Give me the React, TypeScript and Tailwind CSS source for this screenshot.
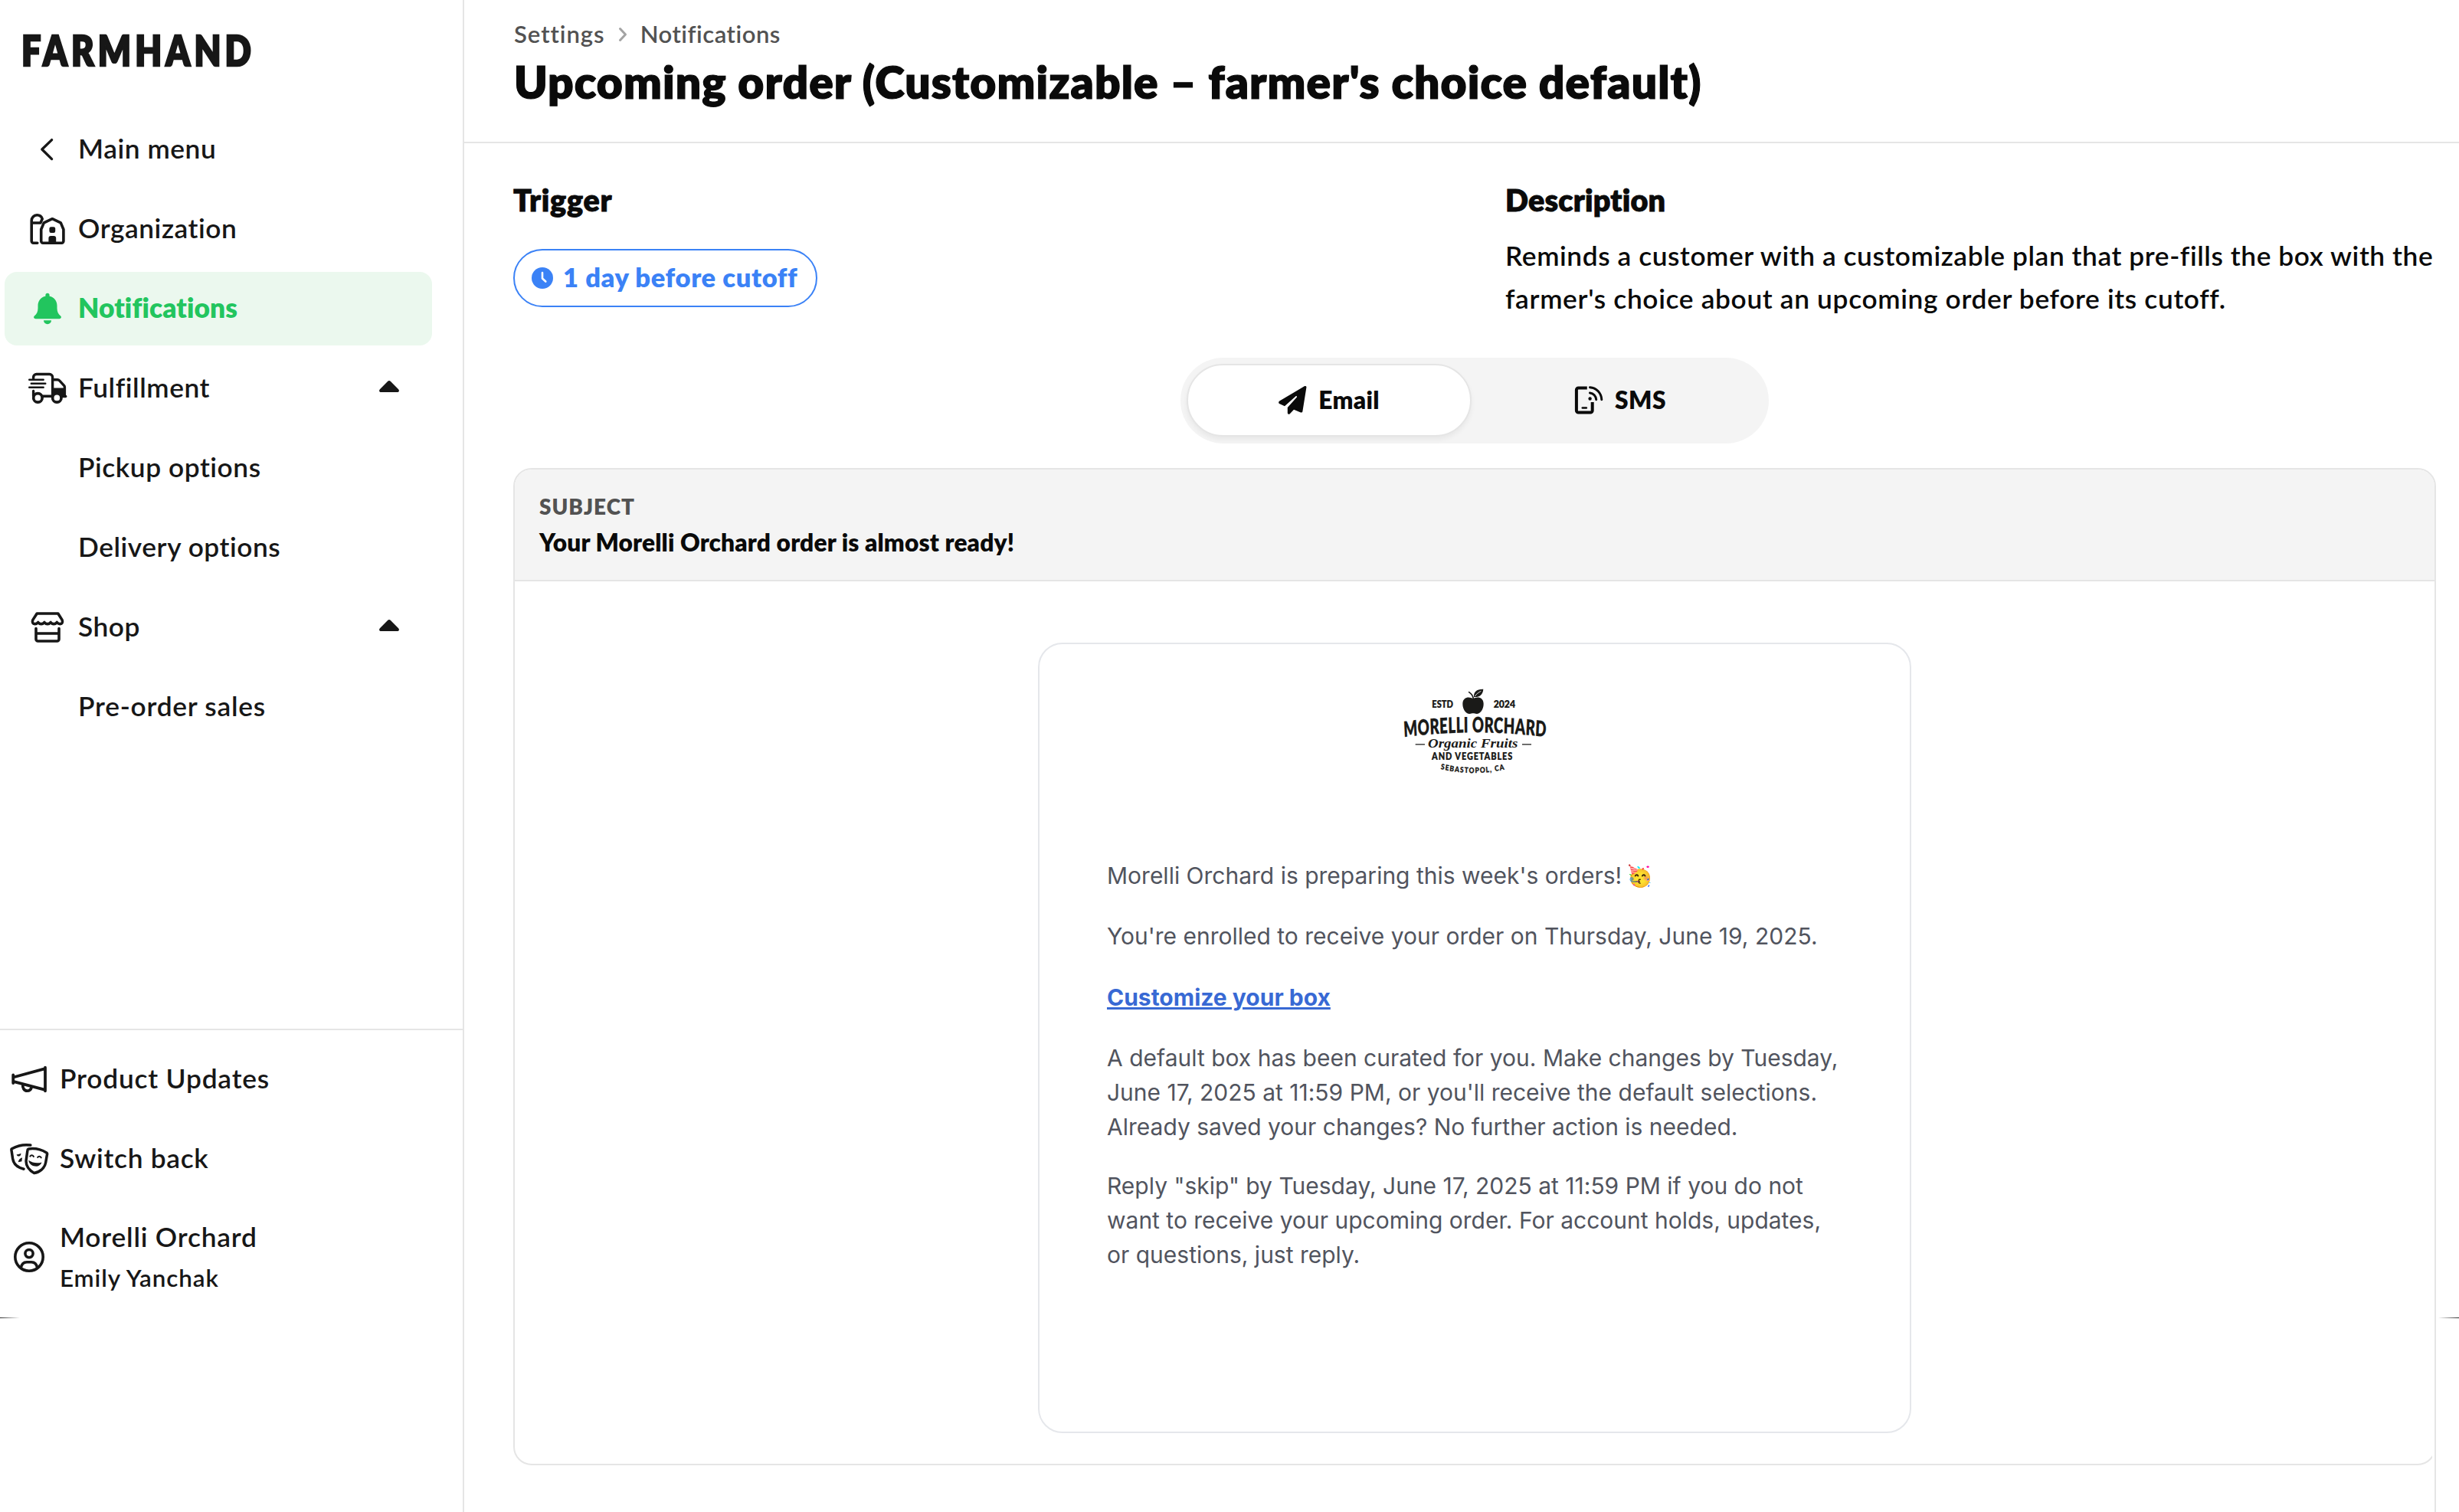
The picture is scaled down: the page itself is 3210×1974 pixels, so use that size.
import React from "react";
import type { ReactNode } from "react";

const box = "block h-[52px] w-[52px] shrink-0 overflow-visible";

function BackIcon() {
  return (
    <svg viewBox="0 0 52 52" className={box} fill="none" stroke="currentColor" strokeWidth="3.3" strokeLinecap="round" strokeLinejoin="round">
      <path d="M31.6 13.6 18.8 26l12.8 12.6" />
    </svg>
  );
}

function BarnIcon() {
  return (
    <svg viewBox="0 0 52 52" className={box} fill="none" stroke="currentColor" strokeWidth="3.6" strokeLinejoin="round" strokeLinecap="round">
      <path d="M17.7 41.8V26.5l3.6-8.6 11-5.2 11 5.2 3.6 8.6v15.3a2.4 2.4 0 0 1-2.4 2.4H20.1a2.4 2.4 0 0 1-2.4-2.4Z" />
      <path d="M12.8 44.2H7.6A2.4 2.4 0 0 1 5.2 41.8V15c0-4 3-7.2 7.1-7.2 3.3 0 6 2.1 6.9 5L17 17.7M5.2 18H17" />
      <rect x="28.4" y="23.2" width="7.8" height="7.8" rx="2.2" fill="currentColor" stroke="none" />
      <path d="M27.4 45v-7a3 3 0 0 1 3-3h3.8a3 3 0 0 1 3 3v7Z" fill="currentColor" stroke="none" />
    </svg>
  );
}

function BellIcon() {
  return (
    <svg viewBox="0 0 52 52" className={box} fill="currentColor">
      <path d="M26 5.8a2.6 2.6 0 0 1 2.6 2.6v1.3c6 1.2 9.9 6 9.9 12.3v3.2c0 4.8 1.5 7.8 4.6 10.4 1.6 1.5.7 3.6-1.6 3.6h-31c-2.3 0-3.2-2.1-1.6-3.6 3.1-2.6 4.6-5.6 4.6-10.4V22c0-6.3 3.9-11.1 9.9-12.3V8.4A2.6 2.6 0 0 1 26 5.8Z" />
      <path d="M21 41.2h10a5 5 0 0 1-10 0Z" />
    </svg>
  );
}

function TruckIcon() {
  return (
    <svg viewBox="0 0 52 52" className={box} fill="none" stroke="currentColor" strokeWidth="3.4" strokeLinecap="round" strokeLinejoin="round">
      <path d="M7.6 13V11.500a4 4 0 0 1 4-4h17a4 4 0 0 1 4 4V36M7.600 29.500V36M20 36.200h12.500" />
      <path d="M32.800 14.800h6.300c1 0 1.900.4 2.500 1.100l6 6.500c.5.6.8 1.200.8 2V36" />
      <path d="M32 25.500h17v9l1.500 1v1.300H32Z" fill="currentColor" stroke="none" />
      <path d="M46 36.500h3.700" />
      <path d="M2.200 14.700h18.500M4.800 19.800h18.500M2.200 24.800h18.500" strokeWidth="2.4" />
      <circle cx="13.4" cy="38.4" r="5.7" fill="#fff" strokeWidth="3.7" />
      <circle cx="38.3" cy="38.4" r="5.7" fill="#fff" strokeWidth="3.7" />
    </svg>
  );
}

function StoreIcon() {
  return (
    <svg viewBox="0 0 52 52" className={box} fill="none" stroke="currentColor" strokeWidth="3.6" strokeLinejoin="round" strokeLinecap="round">
      <path d="M12.200 8h27.600l5.300 8.400c1.200 2.600.1 5.200-2.700 5.200-2.100 0-3.300-.9-4.100-2.200-.9 1.300-2.100 2.200-4.100 2.200s-3.200-.9-4.100-2.200c-.9 1.300-2.100 2.200-4.100 2.200s-3.200-.9-4.100-2.200c-.9 1.300-2.100 2.200-4.100 2.200s-3.200-.9-4.100-2.200c-.9 1.300-2.100 2.200-4.200 2.200-2.800 0-3.900-2.600-2.700-5.200Z" />
      <path d="M11 27.500v14a2.500 2.500 0 0 0 2.500 2.500h25a2.500 2.500 0 0 0 2.500-2.500v-14M11 34h30" />
    </svg>
  );
}

function MegaphoneIcon() {
  return (
    <svg viewBox="0 0 52 52" className={box} fill="none" stroke="currentColor" strokeWidth="3.8" strokeLinecap="round" strokeLinejoin="round">
      <path d="M5.200 20.500v10.500M47 10.700v30.600M5.200 23.500 47 12.200M5.200 28.800 47 39.800" />
      <path d="M17.900 33.500c-.8 3.500 1.600 7.700 5.500 7.700 2.800 0 5-1.700 5.600-4.300" />
    </svg>
  );
}

function MasksIcon() {
  return (
    <svg viewBox="0 0 52 52" className={box} fill="none" stroke="currentColor" strokeWidth="3.5" strokeLinecap="round" strokeLinejoin="round">
      <path d="M27.800 8C20 7 10.500 8.800 3.500 12.800c-.6.4-.7.9-.6 1.500l1.700 11.500c1 6.500 6.500 11.500 14.400 13.400" />
      <path d="M25.600 12.900c8.200-1.100 16 .6 23.200 5 .6.4.9 1 .8 1.700l-2 11.400c-1.300 7.300-8 12.500-15.100 13.500-6.400-3.400-11.300-9.800-10.300-17.200l1.700-12.300c.1-1.200.7-1.900 1.700-2.100Z" />
      <path d="M27.300 22.600c1.200-2 3.700-1.700 4.600.4M37.100 24c1.200-2 3.700-1.700 4.600.4" strokeWidth="2" />
      <path d="M25.200 27.800c5.500 3.500 11.300 4.400 17.300 2.600-1.300 3.600-4.700 5.800-9 5.200-4.500-.5-7.600-3.600-8.300-7.800Z" fill="currentColor" stroke="none" />
      <path d="M9.600 20.200c2 .2 3.900-.3 5.800-1.400.1 2.200-1 3.600-2.700 3.700-1.500.1-2.600-.7-3.100-2.300ZM17 24.300l-.6 5-4.600 1c.3-3 2.100-5.100 5.200-6Z" fill="currentColor" stroke="none" />
    </svg>
  );
}

function AccountIcon() {
  return (
    <svg viewBox="0 0 52 52" className={box} fill="none" stroke="currentColor" strokeWidth="3.6">
      <circle cx="26" cy="26" r="18.2" />
      <circle cx="26" cy="21.6" r="5.1" />
      <path d="M15.300 40.300c.9-5 3.700-7.500 7.700-7.500h6c4 0 6.800 2.500 7.700 7.500" />
    </svg>
  );
}

function Caret() {
  return (
    <svg viewBox="0 0 26 15" className="mb-[5px] ml-auto h-[15px] w-[26px]" fill="currentColor">
      <path d="M11 .9a3 3 0 0 1 4 0l9.900 10.200c1.900 1.900 1 3.900-1.500 3.900H2.600C.1 15-.8 13 1.100 11.100Z" />
    </svg>
  );
}

function ClockIcon() {
  return (
    <svg viewBox="0 0 28 28" className="h-7 w-7">
      <circle cx="14" cy="14" r="14" fill="currentColor" />
      <path d="M14 7v7.500l4.300 4" fill="none" stroke="#fff" strokeWidth="2.6" strokeLinecap="round" strokeLinejoin="round" />
    </svg>
  );
}

function PlaneIcon() {
  return (
    <svg viewBox="0 0 37 37" className="h-[37px] w-[37px]" fill="currentColor">
      <path d="M36.400 1.800 31.400 33c-.2 1.300-1.300 1.900-2.500 1.400L20 30.800l-5.200 5.400c-1.200 1.300-3 .6-3-1.200V28l11.900-13.200c.9-1.100-.3-2.300-1.400-1.400L8 26.300l-6.500-3c-1.700-.8-1.800-2.800-.2-3.700L33.700.3c1.500-.8 3 .1 2.700 1.500Z" />
    </svg>
  );
}

function PhoneSignalIcon() {
  return (
    <svg viewBox="0 0 38 37" className="h-[37px] w-[38px]" fill="none" stroke="currentColor" strokeWidth="4" strokeLinejoin="round">
      <path d="M16.800 2.400H5.500a2.600 2.600 0 0 0-2.600 2.600v27a2.600 2.600 0 0 0 2.600 2.600h15.600a2.600 2.600 0 0 0 2.600-2.600V21" />
      <path d="M10.800 28.500h5" strokeWidth="2.6" strokeLinecap="round" />
      <path d="M20.500 1.800c8.500.5 15 7.300 15.300 15.900M20.500 9c4.500.4 7.900 4 8.200 8.700" strokeWidth="3" strokeLinecap="round" />
      <circle cx="20.6" cy="16.5" r="2.2" fill="currentColor" stroke="none" />
    </svg>
  );
}

function OrchardLogo() {
  return (
    <svg viewBox="-15 0 900 480" className="mt-[29px] h-[160px] w-[300px]" fill="#1a1a18" fontFamily="Lato, sans-serif" fontWeight="800">
      <defs>
        <path id="arch" d="M236 277 Q650 241 1068 277" />
        <path id="bowl" d="M355 402 Q503 433 655 403" />
      </defs>
      <path d="M429 127c-13-10-41-9-41 20 0 22 13 39 27 39 6 0 9-2 14-2s8 2 14 2c14 0 27-17 27-39 0-29-28-30-41-20Z" />
      <path d="M432 120c-2-20 12-32 37-31-2 22-14 32-37 31Z" />
      <path d="M430 128c-1-12-6-20-17-27" fill="none" stroke="#1a1a18" strokeWidth="5" strokeLinecap="round" />
      <path d="M436 117c6-9 14-15 24-20" fill="none" stroke="#fff" strokeWidth="2.5" />
      <g stroke="#1a1a18" strokeWidth="0.6">
        <text x="268" y="162" fontSize="37" textLength="83" lengthAdjust="spacingAndGlyphs">ESTD</text>
        <text x="509" y="162" fontSize="37" textLength="85" lengthAdjust="spacingAndGlyphs">2024</text>
        <g transform="scale(0.67 1)">
          <text fontSize="84"><textPath href="#arch" textLength="831">MORELLI ORCHARD</textPath></text>
        </g>
        <g transform="scale(0.84 1)">
          <text x="318" y="367" fontSize="39" textLength="376">AND VEGETABLES</text>
        </g>
        <g transform="scale(0.85 1)">
          <text fontSize="30"><textPath href="#bowl" textLength="296">SEBASTOPOL, CA</textPath></text>
        </g>
      </g>
      <path d="M203 303.500h37v4h-37zM621 303.500h36v4h-36z" />
      <text x="252" y="319" fontFamily="'Liberation Serif', serif" fontStyle="italic" fontWeight="700" fontSize="50" textLength="352" lengthAdjust="spacingAndGlyphs">Organic Fruits</text>
    </svg>
  );
}

function NavRow({ icon, active, caret, children }: { icon?: ReactNode; active?: boolean; caret?: boolean; children: ReactNode }) {
  return (
    <a className={active ? "flex h-24 items-center gap-[14px] rounded-2xl bg-[#ebf8ee] pr-[43px] pl-[30px] font-extrabold tracking-[0.1px] text-[#22c55e]" : "flex h-24 items-center gap-[14px] rounded-2xl pr-[43px] pl-[30px] font-semibold tracking-[0.55px]"}>
      {icon ?? <span className="w-[52px] shrink-0" />}
      <span className="pb-[3px]">{children}</span>
      {caret && <Caret />}
    </a>
  );
}

function Sidebar() {
  return (
    <aside className="w-[606px] shrink-0 border-r-2 border-neutral-200 text-[35.3px] leading-[44px] whitespace-nowrap text-[#171717]">
      <div className="flex h-[1720px] flex-col">
        <div className="flex h-[147px] items-start pt-[30px] pl-[28px]">
          <span className="origin-left scale-x-[0.82] text-[55px] leading-[70px] font-extrabold tracking-[6.2px] [-webkit-text-stroke:2.4px]">FARMHAND</span>
        </div>
        <nav className="flex w-[564px] flex-col gap-2 pl-[6px]">
          <NavRow icon={<BackIcon />}>Main menu</NavRow>
          <NavRow icon={<BarnIcon />}>Organization</NavRow>
          <NavRow icon={<BellIcon />} active>Notifications</NavRow>
          <NavRow icon={<TruckIcon />} caret>Fulfillment</NavRow>
          <NavRow>Pickup options</NavRow>
          <NavRow>Delivery options</NavRow>
          <NavRow icon={<StoreIcon />} caret>Shop</NavRow>
          <NavRow><span className="tracking-[0.75px]">Pre-order sales</span></NavRow>
        </nav>
        <div className="mt-auto flex h-[377px] flex-col gap-2 border-t-2 border-neutral-200 pt-4 pl-3 font-semibold">
          <a className="flex h-24 items-center gap-[14px] tracking-[0.8px]"><MegaphoneIcon /><span className="pb-[3px]">Product Updates</span></a>
          <a className="flex h-24 items-center gap-[14px] tracking-[0.7px]"><MasksIcon /><span className="pb-[3px]">Switch back</span></a>
          <a className="flex h-36 items-center gap-[14px]">
            <AccountIcon />
            <span className="flex flex-col gap-[11px] pb-[1px]">
              <span className="tracking-[0.8px]">Morelli Orchard</span>
              <span className="text-[31.4px] leading-10 tracking-[0.9px]">Emily Yanchak</span>
            </span>
          </a>
        </div>
      </div>
    </aside>
  );
}

function Header() {
  return (
    <header className="h-[187px] border-b-2 border-neutral-200 pt-[22px] pl-[65px] whitespace-nowrap">
      <div className="flex items-center text-[31.1px] leading-[44px] font-semibold text-[#525252]">
        <span className="tracking-[0.95px]">Settings</span>
        <svg viewBox="0 0 12 20" className="mx-[17px] mt-[1px] h-5 w-3" fill="none" stroke="#a3a3a3" strokeWidth="3" strokeLinecap="round" strokeLinejoin="round">
          <path d="M2.500 2.500 9.500 10l-7 7.500" />
        </svg>
        <span className="tracking-[0.5px]">Notifications</span>
      </div>
      <h1 className="mt-1 text-[58.6px] leading-[72px] font-extrabold tracking-[1.1px] [-webkit-text-stroke:1.2px]">Upcoming order (Customizable – farmer's choice default)</h1>
    </header>
  );
}

function Overview() {
  return (
    <section className="flex pt-[50px] whitespace-nowrap">
      <div className="w-[1295px]">
        <h2 className="text-[39.5px] leading-[48px] font-extrabold tracking-[0.7px] [-webkit-text-stroke:0.8px]">Trigger</h2>
        <div className="mt-[40px] flex h-[76px] w-[397px] items-center gap-[13px] rounded-full border-2 border-[#3b82f6] pl-[22px] text-[#3b82f6]">
          <ClockIcon />
          <span className="pb-[3px] text-[34.5px] leading-[44px] font-extrabold tracking-[0.6px]">1 day before cutoff</span>
        </div>
      </div>
      <div>
        <h2 className="text-[39.5px] leading-[48px] font-extrabold tracking-[0.2px] [-webkit-text-stroke:0.8px]">Description</h2>
        <p className="mt-[21px] text-[35.3px] leading-[56px] font-semibold tracking-[0.57px]">
          Reminds a customer with a customizable plan that pre-fills the box with the
          <br />
          <span className="tracking-[0.65px]">farmer's choice about an upcoming order before its cutoff.</span>
        </p>
      </div>
    </section>
  );
}

function ChannelToggle() {
  return (
    <div className="mx-auto mt-[49px] flex h-28 w-[768px] gap-2 rounded-full bg-[#f4f4f4] p-2 text-[31.7px] leading-[44px] font-extrabold">
      <button className="flex h-[95px] w-[372px] items-center justify-center gap-[15px] rounded-full border-2 border-neutral-200 bg-white shadow-[0_4px_6px_rgba(0,0,0,0.05)]">
        <PlaneIcon />
        <span className="pb-[2px] tracking-[0.33px]">Email</span>
      </button>
      <button className="flex h-[95px] w-[372px] items-center justify-center gap-[15px]">
        <PhoneSignalIcon />
        <span className="pb-[2px] tracking-[0.52px]">SMS</span>
      </button>
    </div>
  );
}

function EmailBody() {
  return (
    <article className="mx-auto mt-20 flex h-[1032px] w-[1140px] flex-col items-center rounded-[32px] border-2 border-gray-200">
      <OrchardLogo />
      <div className="mt-[91px] w-full pl-[88px] font-[Inter,sans-serif] text-[30px] leading-[45px] whitespace-nowrap text-[#51545e]">
        <p className="flex">
          Morelli Orchard is preparing this week's orders!
          <span className="ml-[7px] inline-block -scale-x-100 text-[27px]">🥳</span>
        </p>
        <p className="mt-[34px]">You're enrolled to receive your order on Thursday, June 19, 2025.</p>
        <p className="mt-[35px]">
          <a className="font-bold text-[#3869d4] underline decoration-[3px]">Customize your box</a>
        </p>
        <p className="mt-[34px]">
          A default box has been curated for you. Make changes by Tuesday,
          <br />
          June 17, 2025 at 11:59 PM, or you'll receive the default selections.
          <br />
          Already saved your changes? No further action is needed.
        </p>
        <p className="mt-8">
          Reply "skip" by Tuesday, June 17, 2025 at 11:59 PM if you do not
          <br />
          want to receive your upcoming order. For account holds, updates,
          <br />
          or questions, just reply.
        </p>
      </div>
    </article>
  );
}

function EmailPreview() {
  return (
    <section className="mt-8 h-[1302px] overflow-hidden rounded-3xl border-2 border-neutral-200">
      <div className="h-[146px] border-b-2 border-neutral-200 bg-[#f4f4f4] pt-[28px] pl-[32px] font-extrabold">
        <div className="text-[27.9px] leading-10 tracking-[0.99px] text-[#525252]">SUBJECT</div>
        <div className="mt-[5px] text-[31.7px] leading-[44px] tracking-[0.13px]">Your Morelli Orchard order is almost ready!</div>
      </div>
      <EmailBody />
    </section>
  );
}

export default function App() {
  return (
    <div className="relative flex h-[1974px] w-[3210px] overflow-hidden bg-white font-[Lato,sans-serif] text-[#0a0a0a] [font-variant-ligatures:none]">
      <Sidebar />
      <main className="min-w-0 flex-1">
        <Header />
        <div className="ml-16 w-[2510px]">
          <Overview />
          <ChannelToggle />
          <EmailPreview />
        </div>
      </main>
      <div className="absolute right-[30px] bottom-0 h-[90px] w-[5px] border-r-2 border-neutral-200 bg-white" />
      <div className="absolute top-[1720px] left-0 h-px w-[26px] bg-linear-to-r from-neutral-800 to-transparent" />
      <div className="absolute top-[1720px] right-0 h-px w-[27px] bg-linear-to-l from-neutral-800 to-transparent" />
    </div>
  );
}
